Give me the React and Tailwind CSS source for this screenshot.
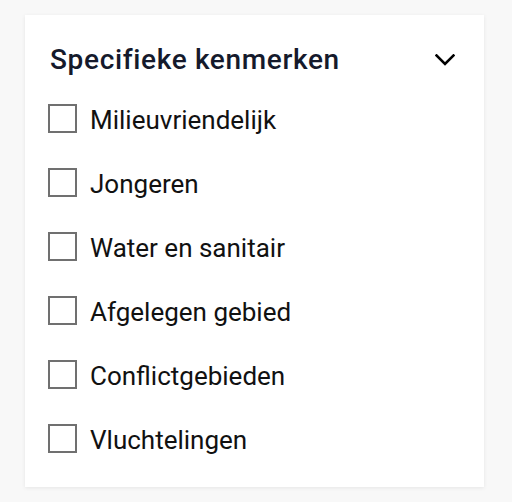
const items = [
  'Milieuvriendelijk',
  'Jongeren',
  'Water en sanitair',
  'Afgelegen gebied',
  'Conflictgebieden',
  'Vluchtelingen',
]

export default function App() {
  return (
    <div className="min-h-screen bg-[#f8f8f8] pt-[15px] pl-[25px]" style={{ fontFamily: 'Roboto, "Noto Sans", sans-serif' }}>
      <div className="w-[459px] h-[472px] bg-white shadow-[0_1px_4px_rgba(0,0,0,0.08)] pt-[25px] pl-[25px] pr-[28px]">
        {/* Header */}
        <div className="h-[40px] flex items-center justify-between">
          <h2 className="text-[28px] font-medium text-[#151a2c] tracking-[0.65px] leading-none">Specifieke kenmerken</h2>
          <svg width="20" height="12" viewBox="0 0 20 12" className="mr-[1px]">
            <polyline points="1.5,1.5 10,10 18.5,1.5" fill="none" stroke="#000" strokeWidth="2.6" strokeLinecap="square" />
          </svg>
        </div>

        <div className="mt-[6px] flex flex-col">
          {items.map((label) => (
            <label key={label} className="h-[64px] flex items-center cursor-pointer">
              <span className="w-[29px] h-[29px] border-2 border-[#707070] bg-white -ml-[2px]" />
              <span className="ml-[13px] mt-[3px] text-[26px] text-[#111] leading-none">{label}</span>
            </label>
          ))}
        </div>
      </div>
    </div>
  )
}
